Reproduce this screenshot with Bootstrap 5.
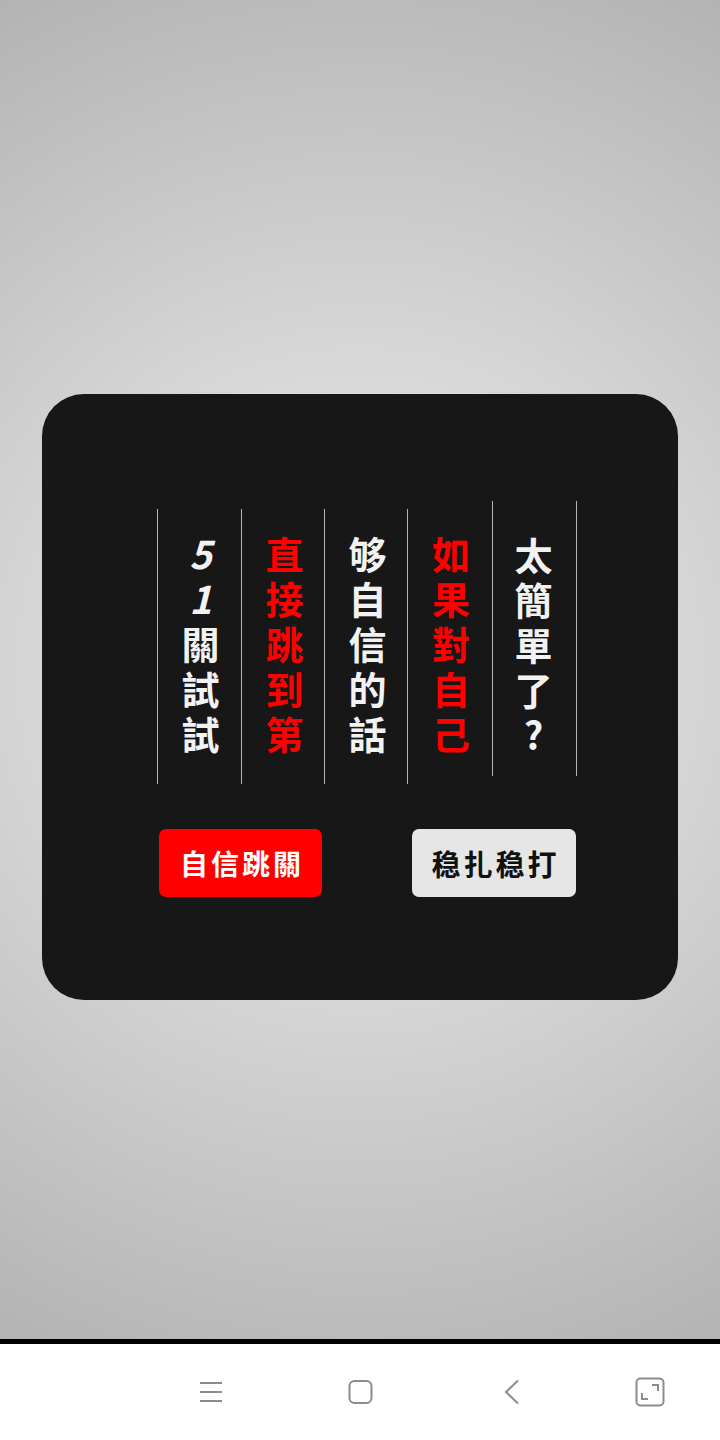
<!doctype html>
<html lang="zh-Hant">
<head>
<meta charset="utf-8">
<title>關卡</title>
<link href="https://cdn.jsdelivr.net/npm/bootstrap@5.3.0/dist/css/bootstrap.min.css" rel="stylesheet">
<style>
html,body{height:100%;margin:0}
body{font-family:"Noto Sans CJK TC","Liberation Sans",sans-serif;background:#fff}
.stage{height:1339px;background:radial-gradient(ellipse 760px 760px at 50% 50%,#e2e2e2 0%,#d8d8d8 40%,#b3b3b3 100%);padding:394px 42px 0}
.blackbar{height:5px;background:#000}
.softnav{height:96px;padding-left:136px}
.softcell{flex:none;width:149px}
.softcell:nth-child(2),.softcell:nth-child(3){width:151px}
.softcell:nth-child(4){width:126px}
.panel{height:606px;background:#171717;border-radius:42px;padding:107px 101px 0 115px}
.verses{height:283px}
.verse{flex:none;width:84px;height:275px;border-left:1px solid #b4b4b4;padding:27px 0 0 1px;color:#f2f2f2}
.verse:nth-child(2),.verse:nth-child(3){width:83px;padding-left:2px}
.verse:nth-child(4){width:85px}
.verse:last-child{width:85px;border-right:1px solid #b4b4b4;align-self:flex-start;padding:36px 3px 0 0}
.verse-char{display:block;height:45px;writing-mode:vertical-rl;text-orientation:upright;font-size:38px;font-weight:700;line-height:1}
.verse-digit{font-style:italic}
.verse.hot{color:#f00}
.choices{margin-top:45px;padding:0 1px 0 2px}
.choice{width:163px;height:68px;border:0;border-radius:7px;font-weight:700;line-height:1;padding:0}
.choice-go,.choice-go:hover{background:#f00;color:#fff;font-size:28px;letter-spacing:3px;text-indent:3px}
.choice-safe,.choice-safe:hover{width:164px;background:#e6e6e6;color:#111;font-size:29px;letter-spacing:3px;text-indent:3px}
.softnav svg{display:block;fill:none;stroke:#8c8c8c;stroke-width:2}
</style>
</head>
<body>
<main class="stage">
  <section class="panel">
    <div class="verses d-flex align-items-end">
      <div class="verse d-flex flex-column align-items-center"><span class="verse-char verse-digit">5</span><span class="verse-char verse-digit">1</span><span class="verse-char">關</span><span class="verse-char">試</span><span class="verse-char">試</span></div>
      <div class="verse hot d-flex flex-column align-items-center"><span class="verse-char">直</span><span class="verse-char">接</span><span class="verse-char">跳</span><span class="verse-char">到</span><span class="verse-char">第</span></div>
      <div class="verse d-flex flex-column align-items-center"><span class="verse-char">够</span><span class="verse-char">自</span><span class="verse-char">信</span><span class="verse-char">的</span><span class="verse-char">話</span></div>
      <div class="verse hot d-flex flex-column align-items-center"><span class="verse-char">如</span><span class="verse-char">果</span><span class="verse-char">對</span><span class="verse-char">自</span><span class="verse-char">己</span></div>
      <div class="verse d-flex flex-column align-items-center"><span class="verse-char">太</span><span class="verse-char">簡</span><span class="verse-char">單</span><span class="verse-char">了</span><span class="verse-char">?</span></div>
    </div>
    <div class="choices d-flex justify-content-between">
      <button type="button" class="btn choice choice-go">自信跳關</button>
      <button type="button" class="btn choice choice-safe">稳扎稳打</button>
    </div>
  </section>
</main>
<div class="blackbar"></div>
<nav class="softnav d-flex align-items-center">
  <div class="softcell d-flex justify-content-center">
    <svg width="24" height="22" viewBox="0 0 24 22" aria-label="選單"><path d="M1 2H23M1 11H23M1 20H23"/></svg>
  </div>
  <div class="softcell d-flex justify-content-center">
    <svg width="26" height="26" viewBox="0 0 26 26" aria-label="主畫面"><rect x="1.5" y="2" width="22" height="22" rx="5"/></svg>
  </div>
  <div class="softcell d-flex justify-content-center">
    <svg width="16" height="26" viewBox="0 0 16 26" aria-label="返回"><path d="M14 1.5 2 13l12 11.5"/></svg>
  </div>
  <div class="softcell d-flex justify-content-center">
    <svg width="30" height="30" viewBox="0 0 30 30" aria-label="全螢幕"><rect x="1.5" y="1.5" width="27" height="27" rx="4"/><path d="M17 8h6v6M7 16v6h6"/></svg>
  </div>
</nav>
<script src="https://cdn.jsdelivr.net/npm/bootstrap@5.3.0/dist/js/bootstrap.bundle.min.js"></script>
</body>
</html>
